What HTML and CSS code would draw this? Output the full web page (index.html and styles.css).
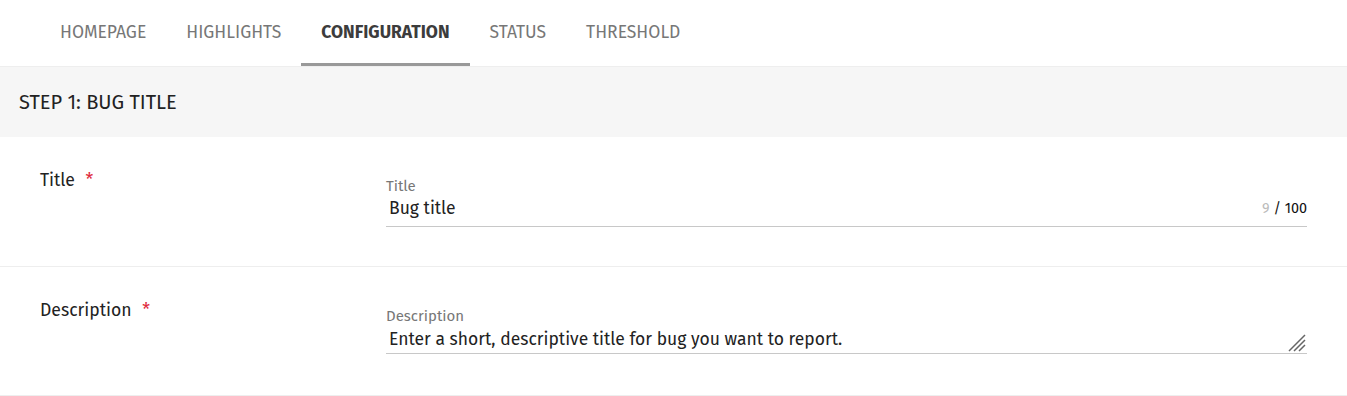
FILE: index.html
```html
<!DOCTYPE html>
<html>
<head>
<meta charset="utf-8">
<link rel="stylesheet" href="styles.css">
</head>
<body>
<nav class="tabs">
  <a class="tab">HOMEPAGE</a>
  <a class="tab">HIGHLIGHTS</a>
  <a class="tab active">CONFIGURATION</a>
  <a class="tab">STATUS</a>
  <a class="tab">THRESHOLD</a>
</nav>
<div class="step">STEP 1: BUG TITLE</div>
<div class="row row-title">
  <div class="label">Title <span class="req">*</span></div>
  <div class="field">
    <div class="field-label">Title</div>
    <div class="input-line">
      <span class="value">Bug title</span>
      <span class="counter"><span class="count">9</span> / 100</span>
    </div>
  </div>
</div>
<div class="row row-desc">
  <div class="label">Description <span class="req">*</span></div>
  <div class="field">
    <div class="field-label">Description</div>
    <div class="input-line">
      <span class="value">Enter a short, descriptive title for bug you want to report.</span>
      <svg class="resize" width="18" height="18" viewBox="0 0 18 18">
        <path d="M17 1 L1 17 M17 6 L6 17 M17 11 L11 17" stroke="#666" stroke-width="1.5" fill="none"/>
      </svg>
    </div>
  </div>
</div>
</body>
</html>
```
FILE: styles.css
```css
* { box-sizing: border-box; }
body {
  margin: 0;
  font-family: "Fira Sans", "Open Sans", sans-serif;
  color: #222;
  background: #fff;
}
.tabs {
  display: flex;
  padding-left: 40px;
  height: 67px;
  border-bottom: 1px solid #eeeeee;
}
.tab {
  display: flex;
  align-items: center;
  padding: 2px 20px 0 20px;
  font-size: 17.5px;
  color: #777;
  border-bottom: 3px solid transparent;
}
.tab.active {
  color: #3c3c3c;
  font-weight: 700;
  border-bottom-color: #999999;
}
.step {
  background: #f6f6f6;
  height: 70px;
  display: flex;
  align-items: center;
  padding-left: 19px;
  font-size: 20px;
  color: #222;
}
.row {
  display: flex;
  padding: 31px 40px 0 40px;
  border-bottom: 1px solid #eeeeee;
}
.row-title { height: 130px; }
.row-desc { height: 129px; }
.label {
  width: 346px;
  flex: none;
  font-size: 17.6px;
  line-height: 26px;
  color: #222;
}
.req {
  color: #e0293c;
  margin-left: 6px;
}
.field {
  flex: 1;
  padding-top: 9px;
}
.field-label {
  font-size: 15px;
  line-height: 18px;
  color: #777;
}
.input-line {
  display: flex;
  align-items: center;
  border-bottom: 1px solid #c8c8c8;
  padding: 1px 0 4px 3px;
  line-height: 26px;
}
.row-desc .input-line { padding: 2px 0 0 3px; }
.value {
  flex: 1;
  font-size: 17.5px;
  color: #222;
}
.counter {
  font-size: 14.4px;
  color: #111;
}
.count { color: #bbb; }
.resize { align-self: flex-end; margin-right: 1px; margin-bottom: 1px; }
```
